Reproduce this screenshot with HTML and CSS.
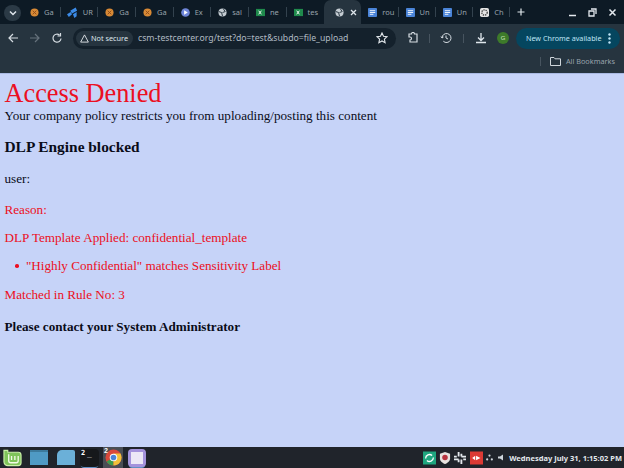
FILE: index.html
```html
<!DOCTYPE html>
<html>
<head>
<meta charset="utf-8">
<title>Access Denied</title>
<link rel="stylesheet" href="styles.css">
</head>
<body>

<!-- Tab strip -->
<div class="tabstrip">
    <div class="tab-search"><svg width="8" height="6" viewBox="0 0 8 6"><path d="M1 1.5l3 3 3-3" fill="none" stroke="#dfe6ec" stroke-width="1.5"/></svg></div>
    <div class="tab"><svg class="fav" viewBox="0 0 10 10"><circle cx="5" cy="5" r="4.5" fill="#d98a35"/><path d="M3 3l4 4M7 3L3 7" stroke="#8a4a1c"/></svg><span>Ga</span></div>
    <div class="tab"><svg class="fav fav-big" viewBox="0 0 12 12"><path d="M0 8l4-2.500 1.500 2.500L2 11zM3.500 4l6-3.500 1.500 3.500-5.500 3zM6.500 8l4-2.500V10l-2.500 2z" fill="#3b8be8"/></svg><span>UR</span></div>
    <div class="tab"><svg class="fav" viewBox="0 0 10 10"><circle cx="5" cy="5" r="4.5" fill="#d98a35"/><path d="M3 3l4 4M7 3L3 7" stroke="#8a4a1c"/></svg><span>Ga</span></div>
    <div class="tab"><svg class="fav" viewBox="0 0 10 10"><circle cx="5" cy="5" r="4.5" fill="#d98a35"/><path d="M3 3l4 4M7 3L3 7" stroke="#8a4a1c"/></svg><span>Ga</span></div>
    <div class="tab"><svg class="fav" viewBox="0 0 10 10"><circle cx="5" cy="5" r="4.8" fill="#6f86d8"/><path d="M3.500 2.500l4 2.500-4 2.500z" fill="#fff"/></svg><span>Ex</span></div>
    <div class="tab"><svg class="fav" viewBox="0 0 10 10"><circle cx="5" cy="5" r="4.5" fill="#c4ccd2"/><path d="M1 4l3 1 1 4M6 1l2 3-3 1" stroke="#1a2833" fill="none"/></svg><span>sal</span></div>
    <div class="tab"><svg class="fav" viewBox="0 0 10 10"><rect x="0" y="1" width="10" height="8" fill="#1f8a4c"/><path d="M3 3l3 4M6 3L3 7" stroke="#fff"/></svg><span>ne</span></div>
    <div class="tab tab-nosep"><svg class="fav" viewBox="0 0 10 10"><rect x="0" y="1" width="10" height="8" fill="#1f8a4c"/><path d="M3 3l3 4M6 3L3 7" stroke="#fff"/></svg><span>tes</span></div>
    <div class="tab-active"><svg class="fav" viewBox="0 0 10 10"><circle cx="5" cy="5" r="4.5" fill="#c4ccd2"/><path d="M1 4l3 1 1 4M6 1l2 3-3 1" stroke="#1a2833" fill="none"/></svg><svg width="7" height="7" viewBox="0 0 7 7"><path d="M1 1l5 5M6 1L1 6" stroke="#dfe6ec" stroke-width="1.300"/></svg></div>
    <div class="tab tab-b"><svg class="fav" viewBox="0 0 10 10"><rect x="0" y="0" width="10" height="10" rx="1" fill="#4a84d8"/><path d="M2 3h6M2 5h6M2 7h4" stroke="#fff"/></svg><span>rou</span></div>
    <div class="tab tab-b"><svg class="fav" viewBox="0 0 10 10"><rect x="0" y="0" width="10" height="10" rx="1" fill="#4a84d8"/><path d="M2 3h6M2 5h6M2 7h4" stroke="#fff"/></svg><span>Un</span></div>
    <div class="tab tab-b"><svg class="fav" viewBox="0 0 10 10"><rect x="0" y="0" width="10" height="10" rx="1" fill="#4a84d8"/><path d="M2 3h6M2 5h6M2 7h4" stroke="#fff"/></svg><span>Un</span></div>
    <div class="tab tab-b"><svg class="fav" viewBox="0 0 10 10"><rect width="10" height="10" rx="2" fill="#e4e4e4"/><circle cx="5" cy="5" r="3" fill="none" stroke="#444" stroke-width="1.500" stroke-dasharray="1.500 1"/></svg><span>Ch</span></div>
    <svg class="tab-new" width="8" height="8" viewBox="0 0 8 8"><path d="M4 .5v7M.5 4h7" stroke="#dfe6ec" stroke-width="1.200"/></svg>
    <div class="win-btns">
        <svg width="9" height="9" viewBox="0 0 9 9"><path d="M1 7.500h7" stroke="#e4e9ee" stroke-width="1.500"/></svg>
        <svg width="9" height="9" viewBox="0 0 9 9"><path d="M3 1h5v5M1 3h5v5H1z" fill="none" stroke="#e4e9ee" stroke-width="1.300"/></svg>
        <svg width="9" height="9" viewBox="0 0 9 9"><path d="M1.500 1.500l6 6M7.500 1.500l-6 6" stroke="#e4e9ee" stroke-width="1.500"/></svg>
    </div>
</div>

<!-- Toolbar -->
<div class="toolbar">
    <svg class="tool-ico" viewBox="0 0 12 12"><path d="M11 6H2M6 2L2 6l4 4" fill="none" stroke="#d5dce2" stroke-width="1.200"/></svg>
    <svg class="tool-ico" viewBox="0 0 12 12"><path d="M1 6h9M6 2l4 4-4 4" fill="none" stroke="#66727c" stroke-width="1.200"/></svg>
    <svg class="tool-ico" viewBox="0 0 12 12"><path d="M10 6.500A4 4 0 1 1 8.500 3M9.500 1v3h-3" fill="none" stroke="#d5dce2" stroke-width="1.200"/></svg>
    <div class="omnibox">
        <div class="secure-chip"><svg width="9" height="9" viewBox="0 0 10 10"><path d="M5 1l4.300 8H.7z" fill="none" stroke="#e2e7eb"/></svg><span>Not secure</span></div>
        <div class="url">csm-testcenter.org/test?do=test&amp;subdo=file_upload</div>
        <svg class="star" viewBox="0 0 12 12"><path d="M6 1l1.500 3.300 3.500.4-2.600 2.400.7 3.600L6 8.900l-3.100 1.800.7-3.600L1 4.700l3.500-.4z" fill="none" stroke="#e2e7eb" stroke-width="1.100"/></svg>
    </div>
    <svg class="tool-ico" viewBox="0 0 12 12"><path d="M2 2h2.500a1.500 1.500 0 0 1 3 0H10v8H3V8a1.500 1.500 0 0 0 0-3H2z" fill="none" stroke="#d5dce2" stroke-width="1.200"/></svg>
    <div class="sep"></div>
    <svg class="tool-ico tool-wide" viewBox="0 0 12 12"><path d="M2 6a4.500 4.500 0 1 1 1.300 3.200M1 4.500l1 1.500 1.500-1M6 3.500V6l2 1" fill="none" stroke="#d5dce2"/></svg>
    <div class="sep sep-wide"></div>
    <svg class="tool-ico" viewBox="0 0 12 12"><path d="M6 1v7M3 5.500l3 3 3-3M1 10.500h10" fill="none" stroke="#dfe6ec" stroke-width="1.300"/></svg>
    <div class="avatar">G</div>
    <div class="update-chip"><span>New Chrome available</span><svg width="3" height="11" viewBox="0 0 3 11"><circle cx="1.500" cy="1.500" r="1.200" fill="#bfe4f5"/><circle cx="1.500" cy="5.500" r="1.200" fill="#bfe4f5"/><circle cx="1.500" cy="9.500" r="1.200" fill="#bfe4f5"/></svg></div>
</div>

<!-- Bookmarks -->
<div class="bookmarks">
    <div class="sep"></div>
    <svg width="11" height="9" viewBox="0 0 11 9"><path d="M.5.500h3.500l1 1.300h5.500v6.700H.5z" fill="none" stroke="#cfd6dc"/></svg>
    <span>All Bookmarks</span>
</div>

<!-- Page -->
<div class="page">
    <div class="denied">Access Denied</div>
    Your company policy restricts you from uploading/posting this content
    <h3>DLP Engine blocked</h3>
    <p>user:</p>
    <p class="red reason">Reason:</p>
    <p class="red">DLP Template Applied: confidential_template</p>
    <ul class="red"><li>"Highly Confidential" matches Sensitivity Label</li></ul>
    <p class="red">Matched in Rule No: 3</p>
    <p class="contact">Please contact your System Administrator</p>
</div>

<!-- Taskbar -->
<div class="taskbar">
    <svg class="mint" viewBox="0 0 20 18"><path d="M1 1h4v2h11a3 3 0 0 1 3 3v8a3 3 0 0 1-3 3H5a4 4 0 0 1-4-4z" fill="#7fc45a" stroke="#c9efa8" stroke-width="1.200"/><path d="M6 5v7a2 2 0 0 0 2 2h6a2 2 0 0 0 2-2V7M9 11V7M12.500 11V7" fill="none" stroke="#f2fbe6" stroke-width="1.400"/></svg>
    <div class="launch folder-dark"></div>
    <div class="launch folder-light"></div>
    <div class="launch term app-open"><i>2</i>_</div>
    <div class="launch chrome-wrap app-open"><i>2</i><svg width="17" height="17" viewBox="0 0 18 18"><circle cx="9" cy="9" r="8.500" fill="#d9483b"/><path d="M9 9L1.700 13.300A8.500 8.500 0 0 0 9 17.500z" fill="#3a9c4e"/><path d="M9 9v8.500a8.500 8.500 0 0 0 7.400-12.700H9z" fill="#f2c13a"/><circle cx="9" cy="9" r="4" fill="#fff"/><circle cx="9" cy="9" r="3" fill="#4a84d8"/></svg></div>
    <div class="launch notes app-open"><b></b></div>
    <div class="tray">
        <svg class="tray-green" width="13" height="14" viewBox="0 0 15 15"><rect width="15" height="15" fill="#1fa67f"/><path d="M3 8a4.500 4.500 0 0 1 7.500-3.300M12 7a4.500 4.500 0 0 1-7.500 3.300" fill="none" stroke="#fff" stroke-width="1.500"/></svg>
        <svg class="tray-shield" width="12" height="14" viewBox="0 0 13 15"><path d="M6.500 1l5.500 2v5c0 3-3 5-5.500 6C4 13 1 11 1 8V3z" fill="#e9e3e0"/><circle cx="6.500" cy="7" r="3" fill="#b8333f"/></svg>
        <svg class="tray-slack" width="12" height="12" viewBox="0 0 13 13"><path d="M5 0v5M8 8v5M0 8h5M8 5h5M0 5h3M10 8h3M5 8v3M8 2v3" stroke="#e4e9ee" stroke-width="2"/></svg>
        <svg class="tray-red" width="13" height="14" viewBox="0 0 15 15"><rect width="15" height="15" fill="#dc3a34"/><path d="M2.500 7.500L6 5v5zM7 5l5 2.500L7 10z" fill="#fff"/></svg>
        <svg class="tray-tree" width="7" height="7" viewBox="0 0 9 9"><circle cx="4.500" cy="2" r="1.400" fill="#cfd6dc"/><circle cx="1.500" cy="7" r="1.400" fill="#cfd6dc"/><circle cx="7.500" cy="7" r="1.400" fill="#cfd6dc"/></svg>
        <svg class="tray-vol" width="6" height="7" viewBox="0 0 6 7"><path d="M0 2.500h2L5 .5v6L2 4.500H0z" fill="#cfd6dc"/></svg>
        <span class="clock">Wednesday July 31, 1:15:02 PM</span>
    </div>
</div>

</body>
</html>
```

FILE: styles.css
```css
html, body {
    margin: 0;
    height: 100%;
}

body {
    display: flex;
    flex-direction: column;
    width: 624px;
    height: 468px;
    overflow: hidden;
    background: #c6d3f8;
    font-family: "Liberation Sans", sans-serif;
}

svg {
    flex: none;
    display: block;
}

/* tab strip */
.tabstrip {
    height: 24px;
    flex: none;
    display: flex;
    align-items: center;
    padding-left: 4px;
    box-sizing: border-box;
    background: #0d1a25;
    color: #98a3ac;
    font-size: 7.5px;
    font-family: "Noto Sans", sans-serif;
}

.tab-search {
    width: 17px;
    height: 16px;
    margin: 2px 2px 0 0;
    border-radius: 8px;
    background: #2b3a46;
    display: flex;
    align-items: center;
    justify-content: center;
}

.tab {
    width: 37.67px;
    height: 10px;
    padding: 0 3px 0 7px;
    box-sizing: border-box;
    display: flex;
    align-items: center;
    gap: 5px;
    border-right: 1px solid #33424e;
}

.tab-nosep {
    border-right: 0;
}

.tab-b {
    width: 37.3px;
}

.tab span {
    white-space: nowrap;
}

.fav {
    width: 9px;
    height: 9px;
}

.fav-big {
    width: 11px;
    height: 11px;
    margin: 0 0 0 -1px;
}

.tab-active {
    width: 37px;
    height: 24px;
    padding-left: 11px;
    box-sizing: border-box;
    display: flex;
    align-items: center;
    gap: 6px;
    border-radius: 7px 7px 0 0;
    background: #26343f;
}

.tab-new {
    margin-left: 7px;
}

.win-btns {
    margin-left: auto;
    padding-right: 7px;
    display: flex;
    gap: 11px;
}

/* toolbar */
.toolbar {
    height: 25px;
    flex: none;
    display: flex;
    align-items: center;
    padding: 3px 0 0 7px;
    box-sizing: border-box;
    background: #26343f;
}

.tool-ico {
    width: 12px;
    height: 12px;
    margin-right: 10px;
}

.tool-wide {
    margin-right: 11px;
}

.omnibox {
    width: 323px;
    height: 21px;
    margin-right: 11px;
    border-radius: 11px;
    display: flex;
    align-items: center;
    background: #14212c;
    padding: 0 8px 0 3px;
    box-sizing: border-box;
    font-family: "Noto Sans", sans-serif;
}

.secure-chip {
    width: 57px;
    height: 15px;
    padding-left: 4px;
    box-sizing: border-box;
    display: flex;
    align-items: center;
    gap: 2px;
    border-radius: 8px;
    background: #26343f;
    color: #dfe6ec;
    font-size: 7.3px;
}

.url {
    flex: 1;
    margin-left: 5px;
    color: #b0bac2;
    font-size: 8.7px;
    white-space: nowrap;
}

.star {
    width: 12px;
    height: 12px;
}

.sep {
    width: 1px;
    height: 9px;
    margin-right: 10px;
    background: #47545f;
}

.sep-wide {
    margin-right: 11px;
}

.avatar {
    width: 12px;
    height: 12px;
    margin-right: 7px;
    border-radius: 50%;
    background: #3d7a2a;
    color: #cfe8c0;
    font-size: 6px;
    line-height: 12px;
    text-align: center;
}

.update-chip {
    width: 104px;
    height: 21px;
    border-radius: 11px;
    display: flex;
    align-items: center;
    justify-content: space-between;
    padding: 0 9px 0 10px;
    box-sizing: border-box;
    background: #05465f;
    color: #bfe4f5;
    font-size: 7.2px;
    font-family: "Noto Sans", sans-serif;
}

/* bookmarks bar */
.bookmarks {
    height: 24px;
    flex: none;
    display: flex;
    align-items: center;
    justify-content: flex-end;
    padding-right: 9px;
    box-sizing: border-box;
    background: #26343f;
    color: #98a3ac;
    font-size: 7.3px;
    font-family: "Noto Sans", sans-serif;
}

.bookmarks .sep {
    margin-right: 9px;
}

.bookmarks span {
    margin-left: 5px;
}

/* page */
.page {
    flex: 1;
    padding: 5px 4px 0 4.5px;
    border-top: 1px solid #a9b9e2;
    font-family: "Liberation Serif", serif;
    font-size: 13.15px;
    line-height: 15.2px;
    color: #0a0c18;
    background: #c6d3f8;
}

.denied {
    font-size: 26.3px;
    line-height: 29px;
    color: #ec0f22;
}

.page h3 {
    margin: 15px 0;
    font-size: 15.4px;
    line-height: 18px;
}

.page p {
    margin: 13.2px 0;
}

.page .reason {
    margin-top: 15.2px;
}

.page ul {
    margin: 13.2px 0;
    padding-left: 10.5px;
    list-style: none;
}

.page li {
    display: flex;
    align-items: center;
}

.page li::before {
    content: "";
    width: 3.5px;
    height: 3.5px;
    margin-right: 7.5px;
    border-radius: 50%;
    background: currentColor;
}

.red {
    color: #ec0f22;
}

.page .contact {
    margin-top: 17px;
    font-weight: bold;
}

/* taskbar */
.taskbar {
    height: 21px;
    flex: none;
    display: flex;
    align-items: center;
    padding-left: 3px;
    background: #20242b;
}

.mint {
    width: 19px;
    height: 18px;
    margin-right: 8px;
}

.launch {
    position: relative;
    width: 18px;
    box-sizing: border-box;
}

.launch i {
    position: absolute;
    top: 0;
    left: 1px;
    font-size: 7px;
    font-style: normal;
    font-weight: bold;
    color: #fff;
}

.app-open {
    box-shadow: 0 2px 0 -1px #5f8fc4;
}

.folder-dark {
    height: 15px;
    margin-right: 9px;
    background: #4f9ac4;
    border-top: 2px solid #3c7a9c;
}

.folder-light {
    height: 15px;
    margin-right: 5px;
    background: #6bb0d8;
    border-radius: 5px 2px 0 0;
}

.term {
    width: 19px;
    height: 18px;
    margin-right: 4px;
    padding-left: 7px;
    background: #16181b;
    border-radius: 4px;
    color: #ddd;
    font: 8px "DejaVu Sans Mono", monospace;
}

.chrome-wrap {
    width: 20px;
    height: 21px;
    margin-right: 5px;
    display: flex;
    align-items: center;
    justify-content: center;
    background: #4a4e55;
}

.notes {
    height: 18px;
    padding: 3px;
    background: #a493dc;
    border-radius: 4px;
}

.notes b {
    display: block;
    width: 12px;
    height: 12px;
    background: #ece8f6;
}

.tray {
    margin-left: auto;
    padding-right: 2px;
    display: flex;
    align-items: center;
}

.tray-green {
    margin-right: 3px;
}

.tray-shield {
    margin-right: 3px;
}

.tray-slack {
    margin-right: 4px;
}

.tray-red {
    margin-right: 3px;
}

.tray-tree {
    margin-right: 5px;
}

.tray-vol {
    margin-right: 5px;
}

.clock {
    color: #e4e9ee;
    font-size: 7.5px;
    font-weight: bold;
    font-family: "Noto Sans", sans-serif;
}
```
